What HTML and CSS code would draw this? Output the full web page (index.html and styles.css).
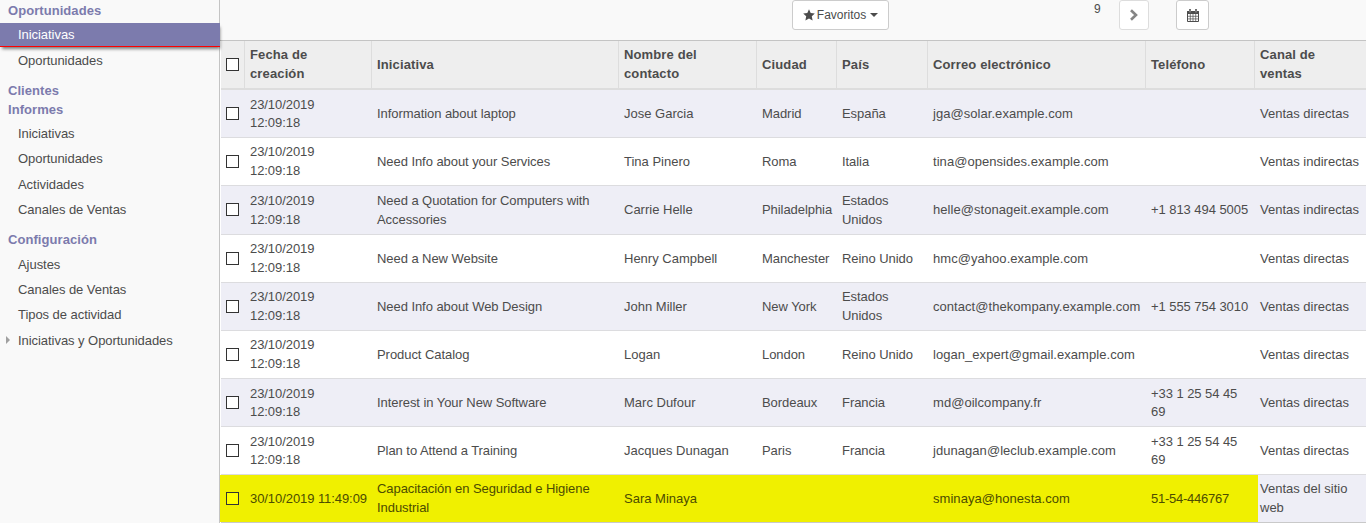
FILE: index.html
```
<!DOCTYPE html>
<html lang="es">
<head>
<meta charset="utf-8">
<title>Iniciativas</title>
<link rel="stylesheet" href="styles.css">
</head>
<body>
<div class="app">
  <nav class="sidebar">
    <h4 class="section">Oportunidades</h4>
    <a class="item active">Iniciativas</a>
    <a class="item after-active">Oportunidades</a>
    <h4 class="section clients">Clientes</h4>
    <h4 class="section reports">Informes</h4>
    <a class="item">Iniciativas</a>
    <a class="item">Oportunidades</a>
    <a class="item tall">Actividades</a>
    <a class="item">Canales de Ventas</a>
    <h4 class="section config">Configuración</h4>
    <a class="item">Ajustes</a>
    <a class="item">Canales de Ventas</a>
    <a class="item">Tipos de actividad</a>
    <a class="item tall parent">Iniciativas y Oportunidades</a>
  </nav>
  <main class="content">
    <div class="toolbar">
      <button class="btn favorites">
        <svg width="12" height="12" viewBox="0 0 12 12"><path d="M6 .3 7.700 4l4.100.5-3 2.800.8 4.100L6 9.400l-3.600 2 .8-4.100-3-2.800L4.300 4z" fill="#4c4c4c"/></svg>
        <span>Favoritos</span><i class="caret"></i>
      </button>
      <span class="count">9</span>
      <button class="btn next">
        <svg width="10" height="12" viewBox="0 0 10 12"><path d="M2 1.200 7 6 2 10.800" fill="none" stroke="#858585" stroke-width="2.600"/></svg>
      </button>
      <button class="btn calendar">
        <svg width="12" height="13" viewBox="0 0 12 13"><path d="M.5 2.500h11v10H.5z" fill="#fff" stroke="#4c4c4c"/><path d="M.5 2.500h11v2H.5zM2.500.5h1v3h-1zM8.500.5h1v3h-1z" fill="#4c4c4c" stroke="#4c4c4c"/><path d="M3 1v2.500M9 1v2.500" stroke="#bbb" stroke-width=".8"/><path d="M3.300 5v7.500M6 5v7.500M8.700 5v7.500M1 7.300h10M1 9.900h10" stroke="#4c4c4c" stroke-width=".7"/></svg>
      </button>
    </div>
    <div class="table">
      <div class="row head"><div><i class="box"></i></div><div>Fecha de<br>creación</div><div>Iniciativa</div><div>Nombre del<br>contacto</div><div>Ciudad</div><div>País</div><div>Correo electrónico</div><div>Teléfono</div><div>Canal de<br>ventas</div></div>
      <div class="row odd tight"><div><i class="box"></i></div><div>23/10/2019<br>12:09:18</div><div>Information about laptop</div><div>Jose Garcia</div><div>Madrid</div><div>España</div><div>jga@solar.example.com</div><div></div><div>Ventas directas</div></div>
      <div class="row"><div><i class="box"></i></div><div>23/10/2019<br>12:09:18</div><div>Need Info about your Services</div><div>Tina Pinero</div><div>Roma</div><div>Italia</div><div>tina@opensides.example.com</div><div></div><div>Ventas indirectas</div></div>
      <div class="row odd high"><div><i class="box"></i></div><div>23/10/2019<br>12:09:18</div><div>Need a Quotation for Computers with<br>Accessories</div><div>Carrie Helle</div><div>Philadelphia</div><div>Estados<br>Unidos</div><div>helle@stonageit.example.com</div><div>+1 813 494 5005</div><div>Ventas indirectas</div></div>
      <div class="row"><div><i class="box"></i></div><div>23/10/2019<br>12:09:18</div><div>Need a New Website</div><div>Henry Campbell</div><div>Manchester</div><div>Reino Unido</div><div>hmc@yahoo.example.com</div><div></div><div>Ventas directas</div></div>
      <div class="row odd"><div><i class="box"></i></div><div>23/10/2019<br>12:09:18</div><div>Need Info about Web Design</div><div>John Miller</div><div>New York</div><div>Estados<br>Unidos</div><div>contact@thekompany.example.com</div><div>+1 555 754 3010</div><div>Ventas directas</div></div>
      <div class="row"><div><i class="box"></i></div><div>23/10/2019<br>12:09:18</div><div>Product Catalog</div><div>Logan</div><div>London</div><div>Reino Unido</div><div>logan_expert@gmail.example.com</div><div></div><div>Ventas directas</div></div>
      <div class="row odd tight"><div><i class="box"></i></div><div>23/10/2019<br>12:09:18</div><div>Interest in Your New Software</div><div>Marc Dufour</div><div>Bordeaux</div><div>Francia</div><div>md@oilcompany.fr</div><div>+33 1 25 54 45<br>69</div><div>Ventas directas</div></div>
      <div class="row tight"><div><i class="box"></i></div><div>23/10/2019<br>12:09:18</div><div>Plan to Attend a Training</div><div>Jacques Dunagan</div><div>Paris</div><div>Francia</div><div>jdunagan@leclub.example.com</div><div>+33 1 25 54 45<br>69</div><div>Ventas directas</div></div>
      <div class="row odd marked"><div><i class="box"></i></div><div>30/10/2019 11:49:09</div><div>Capacitación en Seguridad e Higiene<br>Industrial</div><div>Sara Minaya</div><div></div><div></div><div>sminaya@honesta.com</div><div>51-54-446767</div><div>Ventas del sitio<br>web</div></div>
    </div>
  </main>
</div>
</body>
</html>
```
FILE: styles.css
```
* { box-sizing: border-box; }
body {
  margin: 0;
  overflow: hidden;
  font: 13px/18.57px "Liberation Sans", Arial, sans-serif;
  color: #4c4c4c;
  background: #fff;
}
.app { display: flex; width: 1366px; height: 523px; }

.sidebar {
  position: relative;
  z-index: 1;
  flex: none;
  width: 220px;
  background: #f9f9f9;
  border-right: 1px solid #c4c4c4;
}
.section {
  margin: 0;
  padding-left: 8px;
  height: 20px;
  font-size: 13px;
  line-height: 20px;
  letter-spacing: .06px;
  color: #7c7bad;
}
.section:first-child { height: 23px; line-height: 21px; }
.item {
  display: block;
  height: 25px;
  padding-left: 18px;
  line-height: 25px;
  letter-spacing: -.05px;
}
.item.active {
  width: 220px;
  height: 24px;
  line-height: 23px;
  color: #fff;
  background: #7c7bad;
  border-bottom: 1px solid #f00;
  box-shadow: 1px 3px 3px -1px rgba(0, 0, 0, .5);
}
.item.after-active { height: 34px; line-height: 27px; }
.section.clients { height: 19px; }
.section.reports { height: 21px; }
.item.tall { height: 26px; line-height: 27px; }
.section.config { height: 30px; padding-top: 8px; }
.item.parent { display: flex; align-items: center; padding-left: 6px; }
.item.parent::before {
  content: "";
  margin-right: 8px;
  border: 4px solid transparent;
  border-left-color: #a0a0a0;
  border-right: 0;
}

.content { flex: 1; min-width: 0; }
.toolbar {
  display: flex;
  height: 41px;
  padding-left: 572px;
  background: #f9f9f9;
  border-bottom: 1px solid #c4c4c4;
}
.btn {
  display: flex;
  align-items: center;
  justify-content: center;
  height: 30px;
  padding: 0;
  font: 12px "Liberation Sans", Arial, sans-serif;
  color: #4c4c4c;
  background: #fff;
  border: 1px solid #ccc;
  border-radius: 3px;
}
.favorites { width: 97px; gap: 2px; }
.caret { margin-left: 2px; border: 4px solid transparent; border-top-color: #4c4c4c; border-bottom: 0; }
.count { width: 7px; margin-left: 205px; font-size: 12px; }
.next { width: 30px; margin-left: 18px; border-color: #ddd; }
.calendar { width: 33px; margin-left: 27px; }

.table { padding-left: 1px; }
.row {
  display: grid;
  grid-template-columns: 24px 127px 247px 138px 80px 91px 218px 109px 111px;
  height: 48px;
  border-bottom: 1px solid #dcdcdf;
}
.row > div {
  display: flex;
  align-items: center;
  padding: 1px 0 0 5px;
  white-space: nowrap;
}
.row > div:first-child { padding-top: 0; }
.row > div:nth-child(2) { letter-spacing: -.07px; }
.row > div:nth-child(3),
.row > div:nth-child(5),
.row > div:nth-child(6),
.row > div:nth-child(8) { letter-spacing: -.06px; }
.row > div:nth-child(7) { letter-spacing: .05px; }
.row.odd { background: #eeeef6; }
.row.high { height: 49px; }
.row.high > div:first-child { padding-bottom: 1px; }
.row.tight > div:nth-child(2),
.row.tight > div:nth-child(8) { line-height: 18px; }
.row.head {
  height: 49px;
  font-weight: bold;
  background: #eee;
  border-bottom: 2px solid #ddd;
}
.row.head > div:not(:first-child) { letter-spacing: .13px; }
.head > div:not(:last-child) { border-right: 1px solid #ddd; }
.box { width: 13px; height: 13px; background: #fff; border: 1px solid #333; }
.row.marked {
  border-bottom-color: #c9c9c9;
  background: linear-gradient(90deg, #f0f000 1037px, #eeeef6 1037px);
}
.marked > div:not(:last-child) { color: #4c4c00; }
.marked > div:first-child { box-shadow: -1px 0 #f0f000; }
.row.marked > div:nth-child(8) { letter-spacing: -.25px; }
.marked .box { background: #ff0; }
```
